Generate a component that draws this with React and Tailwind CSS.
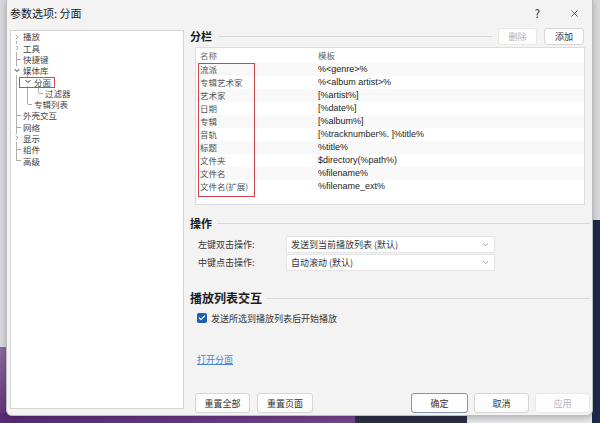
import { Check, ChevronDown, ChevronRight, X } from "lucide-react";

const treeItems = [
  { label: "播放", depth: 0, kind: "closed" },
  { label: "工具", depth: 0, kind: "closed" },
  { label: "快捷键", depth: 0, kind: "leaf" },
  { label: "媒体库", depth: 0, kind: "open" },
  { label: "分面", depth: 1, kind: "open" },
  { label: "过滤器", depth: 2, kind: "leaf" },
  { label: "专辑列表", depth: 1, kind: "leaf" },
  { label: "外壳交互", depth: 0, kind: "leaf" },
  { label: "网络", depth: 0, kind: "leaf" },
  { label: "显示", depth: 0, kind: "closed" },
  { label: "组件", depth: 0, kind: "leaf" },
  { label: "高级", depth: 0, kind: "leaf" },
];

const columns = [
  ["流派", "%<genre>%"],
  ["专辑艺术家", "%<album artist>%"],
  ["艺术家", "[%artist%]"],
  ["日期", "[%date%]"],
  ["专辑", "[%album%]"],
  ["音轨", "[%tracknumber%. ]%title%"],
  ["标题", "%title%"],
  ["文件夹", "$directory(%path%)"],
  ["文件名", "%filename%"],
  ["文件名(扩展)", "%filename_ext%"],
];

function TreeRow({ item }) {
  const pad = ["pl-[1px]", "pl-[12px]", "pl-[23px]"][item.depth];
  return (
    <div className={`flex h-[11.3px] items-center ${pad}`}>
      <div className="relative flex h-full w-[9px] items-center">
        {item.kind === "leaf" && <div className="ml-[5px] h-px w-[5px] bg-[#a8a8a8]" />}
        {item.kind === "closed" && (
          <ChevronRight size={8} strokeWidth={2} className="ml-[1px] bg-white text-[#777]" />
        )}
        {item.kind === "open" && (
          <ChevronDown size={9} strokeWidth={3} className="ml-[1px] bg-white text-[#222]" />
        )}
      </div>
      <span className="ml-[2px] text-[8.5px] leading-none text-[#444]">{item.label}</span>
    </div>
  );
}

function SectionTitle({ text, big }) {
  return (
    <div className={`flex items-center ${big ? "h-[18px]" : "h-[16px]"}`}>
      <span
        className={`font-bold leading-none text-[#1a1a1a] ${big ? "text-[12px]" : "text-[11px]"}`}
      >
        {text}
      </span>
      <div className="ml-[5px] h-px flex-1 bg-[#d8d8d8]" />
    </div>
  );
}

function Dropdown({ value }) {
  return (
    <div className="flex h-full w-[209px] items-center rounded-[2px] border border-[#e4e4e4] bg-white px-[4px]">
      <span className="text-[9px] leading-none text-[#333]">{value}</span>
      <ChevronDown size={9} className="ml-auto text-[#888]" />
    </div>
  );
}

function Button({ children, width, disabled, focused }) {
  return (
    <button
      className={`flex h-full items-center justify-center rounded-[3px] border bg-[#fdfdfd] text-[9px] leading-none ${width}
        ${disabled ? "border-[#e8e8e8] text-[#b4b4b4]" : "text-[#333]"}
        ${focused ? "border-[#8097b2]" : disabled ? "" : "border-[#d6d6d6]"}`}
    >
      {children}
    </button>
  );
}

export default function App() {
  return (
    <div className="relative h-[423px] w-[600px] overflow-hidden bg-[#d8d9dc] font-['Noto_Sans_CJK_SC','Liberation_Sans',sans-serif]">
      {/* desktop bits around the window */}
      <div className="absolute bottom-0 right-0 top-[220px] w-[10px] bg-[#1c2a4e]" />
      <div className="absolute bottom-0 left-0 top-[347px] w-[10px] bg-gradient-to-b from-[#8a6a9a] to-[#5e2d78]" />
      <div className="absolute bottom-0 left-0 right-0 flex h-[10px]">
        <div className="w-[355px] bg-gradient-to-r from-[#5a2a78] to-[#7a4592]" />
        <div className="w-[112px] bg-[#2c2f45]" />
        <div className="w-[125px] bg-[#e9e9ec]" />
        <div className="flex-1 bg-[#1c2a4e]" />
      </div>

      {/* dialog window */}
      <div className="absolute left-[6px] top-0 flex h-[416px] w-[587px] flex-col rounded-b-[6px] border-x border-b border-[#bdbdbd] bg-[#f3f3f3] shadow-[0_2px_6px_rgba(0,0,0,0.25)]">
        {/* TITLE BAR */}
        <div className="flex h-[27px] shrink-0 items-center pl-[3px]">
          <span className="text-[11px] leading-none text-[#1a1a1a]">参数选项: 分面</span>
          <div className="ml-auto flex items-center gap-[29px] pr-[12px]">
            <span className="text-[11px] leading-none text-[#222]">?</span>
            <X size={11} strokeWidth={1.5} className="text-[#222]" />
          </div>
        </div>

        {/* BODY */}
        <div className="flex min-h-0 flex-1 pl-[3px] pr-[2px]">
          {/* TREE */}
          <div className="relative mt-[3px] h-[379px] w-[174px] shrink-0 border border-[#d4d4d4] bg-white">
            <div className="absolute left-[5px] top-[5.65px] h-[124.3px] w-px bg-[#b0b0b0]" />
            <div className="absolute left-[16px] top-[39.55px] h-[33.9px] w-px bg-[#b0b0b0]" />
            <div className="absolute left-[27px] top-[50.85px] h-[11.3px] w-px bg-[#b0b0b0]" />
            <div className="relative">
              {treeItems.map((item) => (
                <TreeRow key={item.label} item={item} />
              ))}
            </div>
            <div className="absolute left-[8px] top-[46px] h-[11px] w-[36px] border-[1.5px] border-[#d0474b]" />
          </div>

          {/* RIGHT PANEL */}
          <div className="ml-[6px] flex min-w-0 flex-1 flex-col pb-[2px]">
            {/* 分栏 */}
            <div className="flex h-[18px] items-center pr-[6px]">
              <span className="text-[11px] font-bold leading-none text-[#1a1a1a]">分栏</span>
              <div className="ml-[6px] mr-[6px] h-px flex-1 bg-[#d8d8d8]" />
              <div className="flex h-[17px] gap-[7px]">
                <Button width="w-[39px]" disabled>
                  删除
                </Button>
                <Button width="w-[40px]">添加</Button>
              </div>
            </div>

            {/* LIST */}
            <div className="relative ml-[5px] mr-[5px] mt-[2px] h-[158px] border border-[#dcdcdc] bg-white">
              <div className="flex h-[15px] items-center text-[8.5px] leading-none text-[#666]">
                <span className="w-[122px] pl-[4px]">名称</span>
                <span>模板</span>
              </div>
              {columns.map(([name, tpl], i) => (
                <div
                  key={name}
                  className={`flex h-[13px] items-center ${i % 2 ? "bg-white" : "bg-[#f8f8f8]"}`}
                >
                  <span className="w-[122px] pl-[4px] text-[8.5px] leading-none text-[#555]">{name}</span>
                  <span className="font-['Liberation_Sans',sans-serif] text-[9px] leading-none text-[#222]">
                    {tpl}
                  </span>
                </div>
              ))}
              <div className="absolute left-[2px] top-[15px] h-[134px] w-[57px] border-[1.5px] border-[#d0474b]" />
            </div>

            {/* 操作 */}
            <div className="mt-[10px]">
              <SectionTitle text="操作" />
            </div>
            <div className="mt-[5px] flex h-[17px] items-center pl-[8px]">
              <span className="w-[88px] text-[9px] leading-none text-[#333]">左键双击操作:</span>
              <Dropdown value="发送到当前播放列表 (默认)" />
            </div>
            <div className="mt-[1px] flex h-[17px] items-center pl-[8px]">
              <span className="w-[88px] text-[9px] leading-none text-[#333]">中键点击操作:</span>
              <Dropdown value="自动滚动 (默认)" />
            </div>

            {/* 播放列表交互 */}
            <div className="mt-[18px]">
              <SectionTitle text="播放列表交互" big />
            </div>
            <div className="mt-[5px] flex h-[12px] items-center pl-[7px]">
              <div className="flex h-[10px] w-[10px] items-center justify-center rounded-[2px] bg-[#1c5fb0]">
                <Check size={8} strokeWidth={3.5} className="text-white" />
              </div>
              <span className="ml-[4px] text-[9px] leading-none text-[#333]">发送所选到播放列表后开始播放</span>
            </div>

            <div className="mt-[29px] h-[14px] pl-[7px] text-[9px] leading-[14px]">
              <span className="text-[#4a86d0] underline">打开分面</span>
            </div>

            {/* BOTTOM BUTTONS */}
            <div className="mt-auto flex h-[20px] pl-[5px]">
              <div className="flex gap-[7px]">
                <Button width="w-[55px]">重置全部</Button>
                <Button width="w-[56px]">重置页面</Button>
              </div>
              <div className="ml-auto flex gap-[6px]">
                <Button width="w-[57px]" focused>
                  确定
                </Button>
                <Button width="w-[55px]">取消</Button>
                <Button width="w-[55px]" disabled>
                  应用
                </Button>
              </div>
            </div>
          </div>
        </div>
      </div>
    </div>
  );
}
